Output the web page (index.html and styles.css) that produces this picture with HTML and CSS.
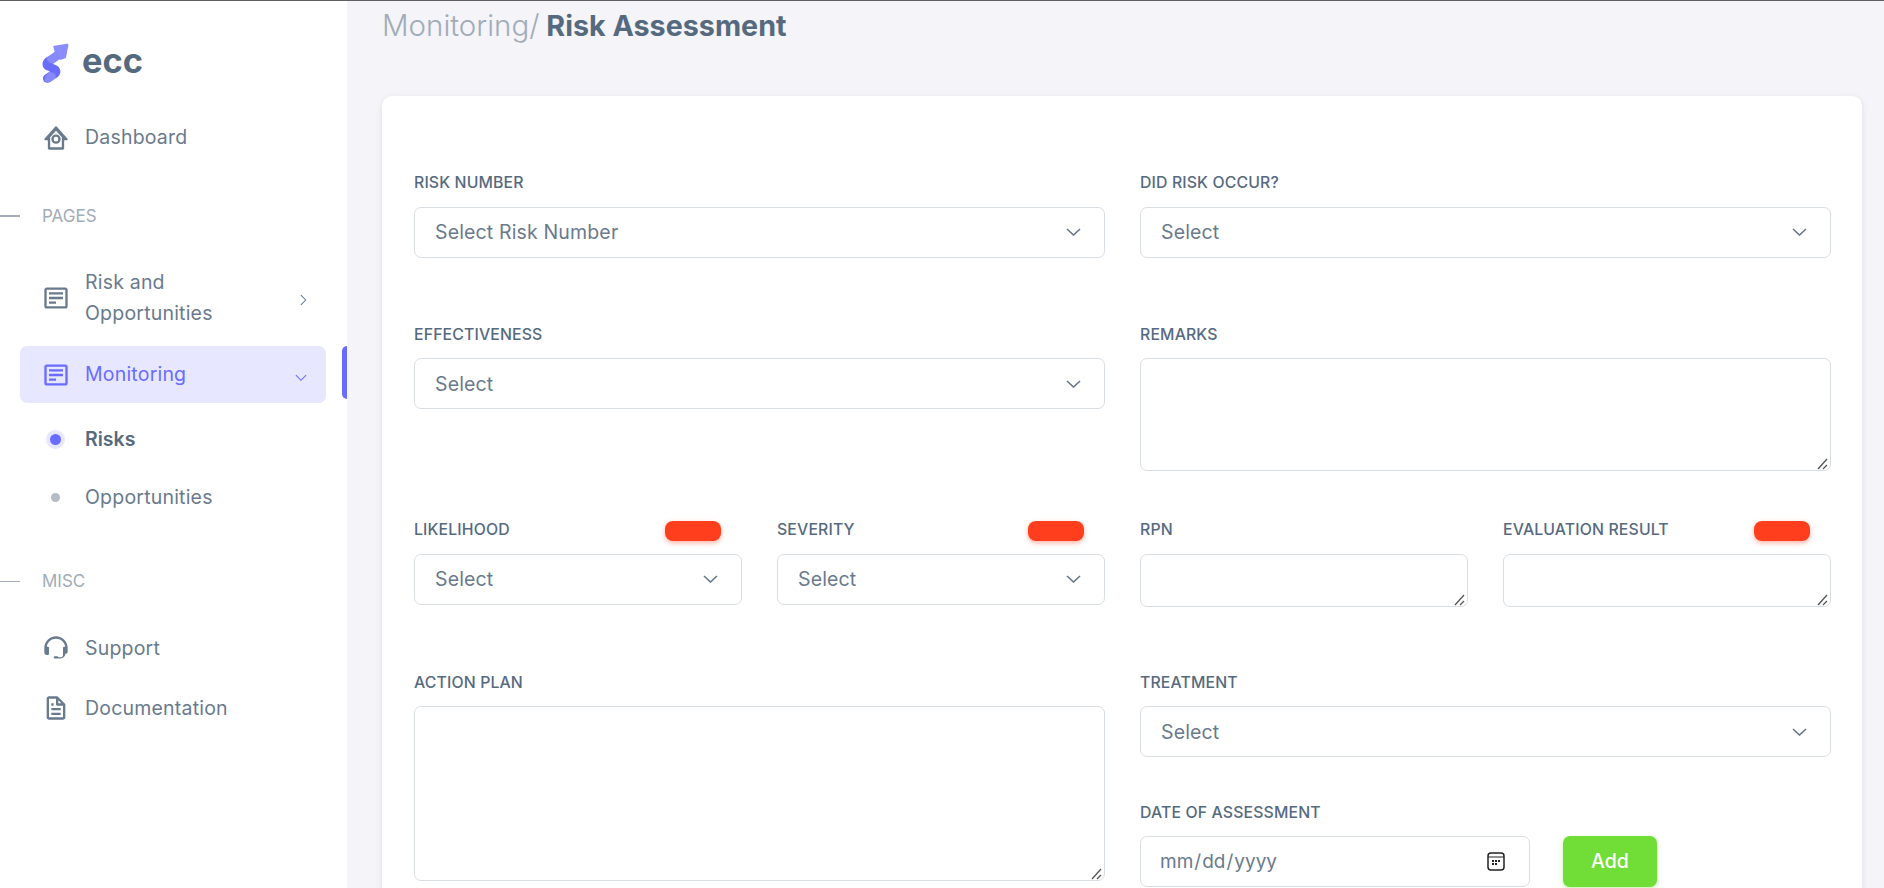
FILE: index.html
```html
<!DOCTYPE html>
<html lang="en">
<head>
    <meta charset="UTF-8">
    <meta name="viewport" content="width=device-width, initial-scale=1.0">
    <title>Risk Assessment</title>
    <link rel="stylesheet" href="styles.css">
</head>
<body>
    <aside class="sidebar">
        <div class="brand">
            <svg class="brand-logo" viewBox="0 -8 27 42" aria-hidden="true">
                <path fill="#8a8cff" stroke="#8a8cff" stroke-width="2.500" stroke-linejoin="round" d="M12.500-4 25.500-6 23 6.500 18.600 8 13.790.36Z"/>
                <path fill="#696cff" d="M13.79.36 3.4 7.44C.57 9.69-.38 12.48.56 15.8c.13.43.54 1.99 2.56 3.43.69.49 2.2 1.15 4.53 1.99l-.05.03-4.96 3.3C.45 26.3.09 28.51 1.56 31.17c1.27 1.65 3.64 2.09 5.53 1.37 1.26-.48 4.36-2.54 9.33-6.16 1.61-1.88 2.28-3.92 1.99-6.14-.44-2.7-2.23-4.66-5.36-5.86l-2.13-.9 7.7-5.49L13.79.36Z"/>
                <path fill="#fff" opacity=".2" d="M5.47 6c-1.42 2.21-1.11 4.07.93 5.57 2.21 1 3.7 1.64 4.46 1.94l4.65.92 3.11-6.45C15.54 3.12 13.93.57 13.79.36 13.58.51 10.81 2.39 5.47 6Z"/>
                <path fill="#fff" opacity=".2" d="m7.5 21.23 4.82 2.09c1.85 1.44 2.08 3.17.69 5.19-1.39 2.02-2.7 3.28-3.93 3.8C5.78 33.43 4.13 34 4.13 34s-1.38-.95-1.76-3.71c-.38-2.77 1.3-4.93 2.16-5.65.58-.5 1.57-1.64 2.97-3.41Z"/>
            </svg>
            <span class="brand-text">ecc</span>
        </div>

        <a class="nav-item nav-dashboard" href="#">
            <svg class="nav-icon" viewBox="0 0 24 24" aria-hidden="true"><path d="M21.74 12.33l-9-10c-.38-.42-1.1-.42-1.48 0l-9 10a1 1 0 0 0-.17 1.08c.16.36.52.59.91.59h2v7a1 1 0 0 0 1 1h12a1 1 0 0 0 1-1v-7h2a1 1 0 0 0 .74-1.67zM17 20H7v-8.61l5-5.56 5 5.56V20z"/><path d="M12 9a4 4 0 1 0 0 8 4 4 0 0 0 0-8zm0 6a2 2 0 1 1 0-4 2 2 0 0 1 0 4z"/></svg>
            <span>Dashboard</span>
        </a>

        <div class="nav-header"><span class="nav-dash"></span>PAGES</div>

        <a class="nav-item nav-tall" href="#">
            <svg class="nav-icon" viewBox="0 0 24 24" aria-hidden="true"><path d="M20 3H4c-1.103 0-2 .897-2 2v14c0 1.103.897 2 2 2h16c1.103 0 2-.897 2-2V5c0-1.103-.897-2-2-2zM4 19V5h16l.002 14H4z"/><path d="M6 7h12v2H6zm0 4h12v2H6zm0 4h6v2H6z"/></svg>
            <span class="nav-label">Risk and Opportunities</span>
            <svg class="nav-arrow" viewBox="0 0 8 13" aria-hidden="true"><path d="M1 1l5.500 5.500L1 12"/></svg>
        </a>
        <a class="nav-item nav-active" href="#">
            <svg class="nav-icon" viewBox="0 0 24 24" aria-hidden="true"><path d="M20 3H4c-1.103 0-2 .897-2 2v14c0 1.103.897 2 2 2h16c1.103 0 2-.897 2-2V5c0-1.103-.897-2-2-2zM4 19V5h16l.002 14H4z"/><path d="M6 7h12v2H6zm0 4h12v2H6zm0 4h6v2H6z"/></svg>
            <span class="nav-label">Monitoring</span>
            <svg class="nav-arrow nav-arrow-down" viewBox="0 0 13 8" aria-hidden="true"><path d="M1 1l5.500 5.500L12 1"/></svg>
        </a>
        <a class="nav-sub nav-sub-active" href="#"><span class="nav-dot"></span>Risks</a>
        <a class="nav-sub" href="#"><span class="nav-dot"></span>Opportunities</a>

        <div class="nav-header nav-header-misc"><span class="nav-dash nav-dash-thin"></span>MISC</div>

        <a class="nav-item nav-support" href="#">
            <svg class="nav-icon" viewBox="0 0 24 24" aria-hidden="true"><path d="M12 2C6.486 2 2 6.486 2 12v4.143C2 17.167 2.897 18 4 18h1a1 1 0 0 0 1-1v-5.143a1 1 0 0 0-1-1h-.908C4.648 6.987 7.978 4 12 4s7.352 2.987 7.908 6.857H19a1 1 0 0 0-1 1V18c0 1.103-.897 2-2 2h-2c0-.553-.447-1-1-1h-2a1 1 0 0 0 0 2h5c2.206 0 4-1.794 4-4 1.103 0 2-.833 2-1.857V12c0-5.514-4.486-10-10-10z"/></svg>
            <span>Support</span>
        </a>
        <a class="nav-item nav-docs" href="#">
            <svg class="nav-icon" viewBox="0 0 24 24" aria-hidden="true"><path d="M19.903 8.586a.997.997 0 0 0-.196-.293l-6-6a.997.997 0 0 0-.293-.196c-.03-.014-.062-.022-.094-.033a.991.991 0 0 0-.259-.051C13.04 2.011 13.021 2 13 2H6c-1.103 0-2 .897-2 2v16c0 1.103.897 2 2 2h12c1.103 0 2-.897 2-2V9c0-.021-.011-.04-.013-.062a.952.952 0 0 0-.051-.259c-.01-.032-.019-.063-.033-.093zM16.586 8H14V5.414L16.586 8zM6 20V4h6v5a1 1 0 0 0 1 1h5l.002 10H6z"/><path d="M8 12h8v2H8zm0 4h8v2H8zm0-8h2v2H8z"/></svg>
            <span>Documentation</span>
        </a>
    </aside>

    <main class="content">
        <h4 class="page-title"><span class="page-crumb">Monitoring/</span> Risk Assessment</h4>

        <div class="card">
            <form class="form">
                <div class="form-row row-first">
                    <div class="field">
                        <label class="field-label">RISK NUMBER</label>
                        <select class="control"><option>Select Risk Number</option></select>
                    </div>
                    <div class="field">
                        <label class="field-label">DID RISK OCCUR?</label>
                        <select class="control"><option>Select</option></select>
                    </div>
                </div>

                <div class="form-row row-second">
                    <div class="field">
                        <label class="field-label">EFFECTIVENESS</label>
                        <select class="control"><option>Select</option></select>
                    </div>
                    <div class="field">
                        <label class="field-label">REMARKS</label>
                        <textarea class="control area-remarks"></textarea>
                    </div>
                </div>

                <div class="form-row row-third">
                    <div class="field-pair">
                        <div class="field">
                            <div class="label-row">
                                <label class="field-label">LIKELIHOOD</label>
                                <span class="pill"></span>
                            </div>
                            <select class="control"><option>Select</option></select>
                        </div>
                        <div class="field">
                            <div class="label-row">
                                <label class="field-label">SEVERITY</label>
                                <span class="pill"></span>
                            </div>
                            <select class="control"><option>Select</option></select>
                        </div>
                    </div>
                    <div class="field-pair">
                        <div class="field">
                            <label class="field-label">RPN</label>
                            <textarea class="control area-small"></textarea>
                        </div>
                        <div class="field">
                            <div class="label-row">
                                <label class="field-label">EVALUATION RESULT</label>
                                <span class="pill"></span>
                            </div>
                            <textarea class="control area-small"></textarea>
                        </div>
                    </div>
                </div>

                <div class="form-row">
                    <div class="field">
                        <label class="field-label">ACTION PLAN</label>
                        <textarea class="control area-plan"></textarea>
                    </div>
                    <div class="field-stack">
                        <div class="field">
                            <label class="field-label">TREATMENT</label>
                            <select class="control"><option>Select</option></select>
                        </div>
                        <div class="field">
                            <label class="field-label">DATE OF ASSESSMENT</label>
                            <div class="date-row">
                                <input class="control date-input" type="date">
                                <button class="btn-add" type="button">Add</button>
                            </div>
                        </div>
                    </div>
                </div>
            </form>
        </div>
    </main>
</body>
</html>
```

FILE: styles.css
```css
* {
    box-sizing: border-box;
}

html, body {
    height: 100%;
}

body {
    margin: 0;
    display: flex;
    overflow: hidden;
    border-top: 1px solid #5f5f5f;
    background-color: #f4f4f9;
    color: #697a8d;
    font-family: 'Inter', 'Liberation Sans', sans-serif;
    font-size: 19.5px;
}

a {
    color: inherit;
    text-decoration: none;
}

/* sidebar */
.sidebar {
    position: relative;
    flex: 0 0 347px;
    padding: 42px 21px 0 20px;
    background-color: #fff;
}

.brand {
    display: flex;
    align-items: center;
    gap: 13px;
    padding-left: 22px;
    height: 41px;
}

.brand-logo {
    width: 27px;
    height: 41px;
}

.brand-text {
    margin-bottom: 5px;
    color: #566a7f;
    font-size: 34.4px;
    font-weight: 700;
    line-height: 1;
}

.nav-item {
    display: flex;
    align-items: center;
    min-height: 57px;
    padding: 0 19px 0 22px;
    border-radius: 7px;
    letter-spacing: 0.2px;
    line-height: 31px;
}

.nav-icon {
    flex: none;
    width: 28px;
    height: 28px;
    margin-right: 15px;
    fill: currentColor;
}

.nav-label {
    flex: 1;
}

.nav-tall .nav-label {
    max-width: 180px;
}

.nav-arrow {
    flex: none;
    width: 7px;
    height: 12px;
    margin-top: 4px;
    margin-left: auto;
    fill: none;
    stroke: currentColor;
    stroke-width: 1.2;
}

.nav-arrow-down {
    width: 12px;
    height: 8px;
    margin-top: 7px;
}

.nav-dashboard {
    margin-top: 25px;
}

.nav-header {
    display: flex;
    align-items: center;
    gap: 22px;
    margin: 40px 0 36px -20px;
    height: 20px;
    color: #a1acb8;
    font-size: 17px;
}

.nav-dash {
    width: 20px;
    height: 2px;
    background-color: #a1acb8;
}

.nav-dash-thin {
    height: 1px;
}

.nav-tall {
    min-height: 72px;
    margin-bottom: 12px;
}

.nav-active {
    position: relative;
    background-color: #e7e7ff;
    color: #696cff;
}

/* the bar at the edge of the sidebar */
.nav-active::after {
    content: "";
    position: absolute;
    top: 0;
    right: -21px;
    width: 5px;
    height: 53px;
    border-radius: 5px 0 0 5px;
    background-color: #696cff;
}

.nav-sub {
    display: flex;
    align-items: center;
    height: 58px;
    padding-left: 31px;
    letter-spacing: 0.2px;
}

.nav-active + .nav-sub {
    margin-top: 7px;
}

.nav-dot {
    flex: none;
    width: 9px;
    height: 9px;
    margin-right: 25px;
    border-radius: 50%;
    background-color: #b4bdc6;
}

.nav-sub-active {
    color: #566a7f;
    font-weight: 600;
    letter-spacing: 0;
}

.nav-sub-active .nav-dot {
    width: 11px;
    height: 11px;
    margin: 0 24px 0 -1px;
    background-color: #696cff;
    box-shadow: 0 0 0 4px #e7e7ff;
}

.nav-header-misc {
    margin-top: 45px;
    margin-bottom: 27px;
}

.nav-support {
    min-height: 60px;
}

.nav-docs {
    min-height: 60px;
}

/* page */
.content {
    flex: 1;
    min-width: 0;
    padding: 7px 22px 0 35px;
}

.page-title {
    margin: 0 0 53px;
    color: #566a7f;
    font-size: 28.7px;
    font-weight: 700;
    line-height: 34px;
}

.page-crumb {
    color: #a1acb8;
    font-size: 29.5px;
    font-weight: 300;
}

.card {
    padding: 77px 31px 40px 32px;
    border-radius: 10px;
    background-color: #fff;
    box-shadow: 0 2px 6px rgba(67, 89, 113, 0.12);
}

.form-row {
    display: grid;
    grid-template-columns: 691px 691px;
    column-gap: 35px;
    align-items: start;
}

.row-first {
    margin-bottom: 67px;
}

.row-second {
    margin-bottom: 49px;
}

.row-third {
    margin-bottom: 66px;
}

.field-pair {
    display: grid;
    grid-template-columns: 328px 328px;
    column-gap: 35px;
}

.field-stack {
    display: flex;
    flex-direction: column;
    gap: 46px;
}

.field-label {
    display: block;
    margin-bottom: 13.5px;
    color: #566a7f;
    font-size: 15.8px;
    font-weight: 500;
    letter-spacing: 0.15px;
    line-height: 20px;
}

.label-row {
    display: flex;
    align-items: flex-start;
    justify-content: space-between;
    padding-right: 21px;
}

.pill {
    width: 56px;
    height: 20px;
    margin-top: 1px;
    border-radius: 8px;
    background-color: #ff3e1d;
    box-shadow: 0 2px 5px rgba(255, 62, 29, 0.4);
}

.control {
    display: block;
    width: 100%;
    height: 51px;
    padding: 8px 20px;
    border: 1px solid #d9dee3;
    border-radius: 7px;
    background-color: #fff;
    color: #697a8d;
    font-family: inherit;
    font-size: 19.5px;
    letter-spacing: 0.15px;
    outline: none;
}

select.control {
    appearance: none;
    background-image: url("data:image/svg+xml,%3Csvg xmlns='http://www.w3.org/2000/svg' viewBox='0 0 15 8'%3E%3Cpath d='M1 1l6.500 6L14 1' fill='none' stroke='%2367778a' stroke-width='1.600'/%3E%3C/svg%3E");
    background-repeat: no-repeat;
    background-position: right 23px center;
    background-size: 15px 8px;
}

textarea.control {
    resize: both;
}

textarea.control::-webkit-resizer {
    background-image: url("data:image/svg+xml,%3Csvg xmlns='http://www.w3.org/2000/svg' viewBox='0 0 15 15'%3E%3Cpath d='M3 14l9-10M8 14l4-4' fill='none' stroke='%23555' stroke-width='1.300'/%3E%3C/svg%3E");
    background-repeat: no-repeat;
}

.area-remarks {
    height: 113px;
}

.area-small {
    height: 53px;
}

.area-plan {
    height: 175px;
}

.date-row {
    display: flex;
    gap: 33px;
    margin-top: -1px;
}

.date-input {
    width: 390px;
    padding-left: 18px;
    padding-right: 24px;
    font-size: 19px;
    letter-spacing: 0;
}

.date-input::-webkit-calendar-picker-indicator {
    width: 18px;
    height: 19px;
    margin: 0;
    padding: 0;
    background-image: url("data:image/svg+xml,%3Csvg xmlns='http://www.w3.org/2000/svg' viewBox='0 0 18 19'%3E%3Crect x='1' y='1' width='16' height='17' rx='3' fill='none' stroke='%23222' stroke-width='1.500'/%3E%3Cpath d='M1 5h16' stroke='%23222' stroke-width='1.200'/%3E%3Cpath d='M5 8h2v2H5zM8 8h2v2H8zM11 8h2v2h-2zM5 11h2v2H5zM8 11h2v2H8z' fill='%23222'/%3E%3C/svg%3E");
    background-repeat: no-repeat;
    background-size: 18px 19px;
}

.btn-add {
    width: 94px;
    height: 51px;
    border: none;
    border-radius: 7px;
    background-color: #71dd37;
    box-shadow: 0 2px 5px rgba(113, 221, 55, 0.4);
    color: #fff;
    font-family: inherit;
    font-size: 19.5px;
    font-weight: 500;
}
```
